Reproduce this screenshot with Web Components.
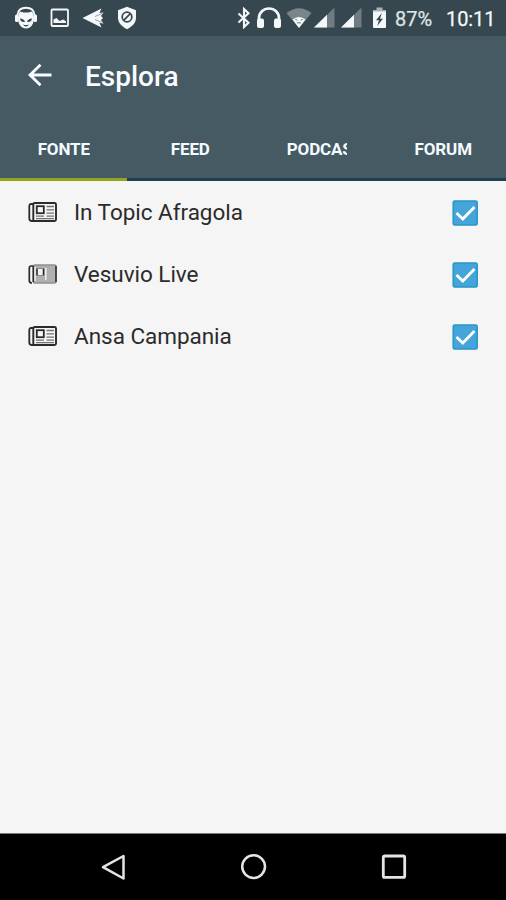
<!DOCTYPE html>
<html lang="it">
<head>
<meta charset="utf-8">
<meta name="viewport" content="width=device-width, initial-scale=1">
<title>Esplora</title>
<style>
  html, body {
    margin: 0;
    height: 100%;
    background: #f5f5f5;
    font-family: Roboto, "Noto Sans", sans-serif;
  }
</style>
</head>
<body>
<explore-screen></explore-screen>

<script>
// name -> [width, height, markup], drawn with currentColor
const ICONS = {
  cat: [24, 24, `
    <path d="M3.500 9C4 4 7.500 1.800 12 1.800S20 4 20.500 9" fill="none" stroke="currentColor" stroke-width="1.900"/>
    <path d="M4.500 8.500L6 5.500l3.500 1h5l3.500-1L19.500 8.500c1 4 .5 8.500-2 11.500-2.500 3.300-8.500 3.300-11 0-2.500-3-3-7.500-2-11.500z" fill="currentColor"/>
    <rect x="1" y="8.500" width="3.500" height="7.500" rx="1.600" fill="currentColor"/>
    <rect x="19.500" y="8.500" width="3.500" height="7.500" rx="1.600" fill="currentColor"/>
    <path d="M6 12.500q4 0 5 3.500-4.500.5-5-3.500zM18 12.500q-4 0-5 3.500 4.500.5 5-3.500zM9 18.500q3 1.200 6 0-1 2-3 2t-3-2z" fill="#37474f"/>`],
  picture: [20, 20, `
    <rect x="1.500" y="1.500" width="16.500" height="16.500" rx="1" fill="none" stroke="currentColor" stroke-width="1.800"/>
    <path d="M3.500 15v-3.500l3-1.500 3 3 4-1.500 2.500 2V15z" fill="currentColor"/>`],
  dart: [24, 22, `
    <path d="M1.500 11L20.500 1.500 18.500 6l4-.5L20 9l2 2-2 2 2.500 3.500-4-.5 2 4.500z" fill="currentColor"/>
    <path d="M14 9.500l7-3M14 12.500l7 3" stroke="#37474f" stroke-width=".5"/>`],
  shield: [20, 24, `
    <path d="M10 .8l9 3.500v7.500c0 5-4 9-9 11.500-5-2.500-9-6.500-9-11.500V4.300z" fill="currentColor"/>
    <circle cx="10" cy="11" r="4.800" fill="none" stroke="#37474f" stroke-width="1.700"/>
    <path d="M6.700 14.300l6.600-6.600" stroke="#37474f" stroke-width="1.700"/>`],
  bluetooth: [14, 22, `
    <path d="M1.500 6.500l10 9.200L7 20V2l4.500 4.300-10 9.200" fill="none" stroke="currentColor" stroke-width="2.100"/>`],
  headphones: [26, 22, `
    <path d="M3 15v-4a10 9.500 0 0 1 20 0v4" fill="none" stroke="currentColor" stroke-width="2.700"/>
    <rect x="1" y="11.500" width="7" height="9.500" rx="2" fill="currentColor"/>
    <rect x="18" y="11.500" width="7" height="9.500" rx="2" fill="currentColor"/>`],
  wifi: [26, 22, `
    <path d="M.5 6Q13-3.500 25.500 6L13 21z" fill="currentColor" opacity=".35"/>
    <path d="M6.500 12.500Q13 7.500 19.500 12.500L13 21z" fill="currentColor"/>
    <path d="M9.500 12l1.500 1.500M15 13.500l1.500-1.500M12 15v1.500M14 15v1.500" stroke="#37474f" stroke-width="1"/>`],
  signal: [21, 22, `
    <path d="M0 20.500L20.500.500v20z" fill="currentColor" opacity=".3"/>
    <path d="M0 20.500L13 7.800v12.700z" fill="currentColor"/>`],
  battery: [15, 22, `
    <path d="M4.500.500h6V3H14v4H1V3h3.500z" fill="currentColor" opacity=".6"/>
    <path d="M1 4.500h13V20a1 1 0 0 1-1 1H2a1 1 0 0 1-1-1z" fill="currentColor"/>
    <path d="M9.800 6L4 13.200h3L5.200 19l5.800-7.200H8z" fill="#37474f"/>`],
  back: [26, 26, `
    <path d="M24.500 13H3M13.500 2.800L3 13l10.500 10.200" fill="none" stroke="currentColor" stroke-width="2.800"/>`],
  news: [30, 22, `
    <rect x="5.300" y="2" width="22.700" height="18" rx="1.500" fill="none" stroke="currentColor" stroke-width="1.900"/>
    <path d="M5 3H3Q1.300 3 1.300 5v12.500Q1.300 20 4 20h3" fill="none" stroke="currentColor" stroke-width="1.800"/>
    <rect x="8.800" y="5.200" width="7" height="7" fill="none" stroke="currentColor" stroke-width="1.800"/>
    <path d="M18.500 5.500H26M18.500 8.800H26M18.500 12.200H26M8 15.200h8M18.500 15.200H26M8 17.700h18" stroke="currentColor" stroke-width="1.300" opacity=".65"/>`],
  newsfaded: [30, 22, `
    <rect x="5.300" y="2" width="22.700" height="18" rx="1.500" fill="#b0b0b0" stroke="#8e8e8e" stroke-width="1.500"/>
    <path d="M9.500 6h5.500v6H9.500zM17 5h1.500v12H17zM6.300 4h1.500v14H6.300z" fill="#f2f2f2"/>
    <path d="M5 3H3Q1.300 3 1.300 5v12.500Q1.300 20 4 20" fill="none" stroke="currentColor" stroke-width="1.700"/>
    <path d="M5.300 3v16M28 3v16M9 5.500v7M15.500 5.500v7" stroke="currentColor" stroke-width="1.500"/>
    <path d="M9 12.500h6.500M9 5.500h6.500" stroke="#888" stroke-width="1.200"/>`],
  check: [26, 26, `
    <rect x="1.200" y="1" width="24" height="24" rx="1.500" fill="#45a5da" stroke="#2795c6" stroke-width="1.500"/>
    <path d="M4.500 13l6.300 6L22.500 7" fill="none" stroke="#fff" stroke-width="2.800"/>`],
  navback: [26, 28, `
    <path d="M23.500 3v22.500L3 14.200z" fill="none" stroke="currentColor" stroke-width="2.500" stroke-linejoin="round"/>`],
  navhome: [28, 28, `
    <circle cx="13.600" cy="13.600" r="11.400" fill="none" stroke="currentColor" stroke-width="2.500"/>`],
  navrecent: [26, 26, `
    <rect x="2.300" y="2" width="21.400" height="21.400" rx="1.500" fill="none" stroke="currentColor" stroke-width="2.800"/>`],
};

class UiIcon extends HTMLElement {
  constructor() {
    super();
    this.attachShadow({ mode: "open" });
  }

  connectedCallback() {
    const [w, h, body] = ICONS[this.getAttribute("name")];
    this.shadowRoot.innerHTML = `
      <style>
        :host { display: block; flex: none; }
        svg { display: block; }
      </style>
      <svg width="${w}" height="${h}" viewBox="0 0 ${w} ${h}" aria-hidden="true">${body}</svg>
    `;
  }
}

class StatusBar extends HTMLElement {
  constructor() {
    super();
    this.attachShadow({ mode: "open" }).innerHTML = `
      <style>
        :host {
          display: flex;
          align-items: center;
          justify-content: space-between;
          box-sizing: border-box;
          height: 36px;
          padding: 0 12px 0 14px;
          background: #37474f;
          color: #f4f8fa;
          font-size: 20px;
          line-height: 34px;
        }
        .group { display: flex; align-items: center; }
        .left { gap: 11.500px; }
        .right ui-icon { margin-right: 5px; }
        .right ui-icon[name="headphones"] { margin-right: 4px; }
        .right ui-icon[name="wifi"] { margin-right: 2px; }
        .right ui-icon[name="signal"] { margin-right: 6px; }
        .right ui-icon[name="signal"].last { margin-right: 10px; }
        .right ui-icon[name="battery"] { margin-right: 8px; }
        .level { width: 51px; color: #dfe5e8; }
        .time { width: 48px; white-space: nowrap; letter-spacing: -0.1px; }
        .level, .time { padding-top: 2px; -webkit-text-stroke: 0.25px; }
      </style>
      <div class="group left">
        <ui-icon name="cat"></ui-icon>
        <ui-icon name="picture"></ui-icon>
        <ui-icon name="dart"></ui-icon>
        <ui-icon name="shield"></ui-icon>
      </div>
      <div class="group right">
        <ui-icon name="bluetooth"></ui-icon>
        <ui-icon name="headphones"></ui-icon>
        <ui-icon name="wifi"></ui-icon>
        <ui-icon name="signal"></ui-icon>
        <ui-icon name="signal" class="last"></ui-icon>
        <ui-icon name="battery"></ui-icon>
        <span class="level">87%</span>
        <span class="time">10:11</span>
      </div>
    `;
  }
}

class AppBar extends HTMLElement {
  constructor() {
    super();
    this.attachShadow({ mode: "open" }).innerHTML = `
      <style>
        :host {
          display: flex;
          align-items: center;
          gap: 32px;
          height: 80px;
          padding-left: 27px;
          background: #455a63;
          color: #f8fbff;
          font-size: 28px;
          font-weight: 500;
          line-height: 80px;
        }
        ui-icon { margin-bottom: 2px; }
        .title { padding-top: 1px; }
      </style>
      <ui-icon name="back"></ui-icon>
      <span class="title"><slot></slot></span>
    `;
  }
}

class TabItem extends HTMLElement {
  constructor() {
    super();
    this.attachShadow({ mode: "open" }).innerHTML = `
      <style>
        :host {
          display: flex;
          justify-content: center;
          box-sizing: border-box;
          border-bottom: 3px solid #1d424e;
          padding: 22px 0 0 1px;
          min-width: 0;
        }
        :host([selected]) { border-color: #93a51f; }
        span {
          max-width: 60px;
          height: 22px;
          overflow: hidden;
          white-space: nowrap;
        }
      </style>
      <span><slot></slot></span>
    `;
  }
}

class TabStrip extends HTMLElement {
  constructor() {
    super();
    this.attachShadow({ mode: "open" }).innerHTML = `
      <style>
        :host {
          display: grid;
          grid-template-columns: repeat(4, 1fr);
          height: 65px;
          background: #455a63;
          color: #f4faff;
          font-size: 17px;
          font-weight: 700;
          line-height: 22px;
          letter-spacing: -0.15px;
        }
      </style>
      <slot></slot>
    `;
  }
}

class SourceRow extends HTMLElement {
  constructor() {
    super();
    this.attachShadow({ mode: "open" });
  }

  connectedCallback() {
    this.shadowRoot.innerHTML = `
      <style>
        :host {
          display: flex;
          align-items: center;
          box-sizing: border-box;
          height: 62px;
          padding: 0 28px;
          color: #2b2b2b;
          font-size: 22.5px;
          line-height: 30px;
        }
        .label { flex: 1; padding-left: 16px; letter-spacing: -0.03px; }
        ui-icon[name="check"] { margin-top: 2px; }
      </style>
      <ui-icon name="${this.getAttribute("icon") || "news"}"></ui-icon>
      <span class="label"><slot></slot></span>
      <ui-icon name="check"></ui-icon>
    `;
  }
}

class NavBar extends HTMLElement {
  constructor() {
    super();
    this.attachShadow({ mode: "open" }).innerHTML = `
      <style>
        :host {
          display: flex;
          align-items: center;
          justify-content: space-between;
          box-sizing: border-box;
          height: 67px;
          padding: 0 99px 0 100px;
          border-top: 1px solid #777;
          background: #000;
          color: #e4e4e4;
        }
      </style>
      <ui-icon name="navback"></ui-icon>
      <ui-icon name="navhome"></ui-icon>
      <ui-icon name="navrecent"></ui-icon>
    `;
  }
}

class ExploreScreen extends HTMLElement {
  constructor() {
    super();
    this.attachShadow({ mode: "open" }).innerHTML = `
      <style>
        :host {
          display: flex;
          flex-direction: column;
          height: 100vh;
          overflow: hidden;
        }
        main { flex: 1; }
      </style>
      <status-bar></status-bar>
      <app-bar>Esplora</app-bar>
      <tab-strip>
        <tab-item selected>FONTE</tab-item>
        <tab-item>FEED</tab-item>
        <tab-item>PODCAST</tab-item>
        <tab-item>FORUM</tab-item>
      </tab-strip>
      <main>
        <source-row>In Topic Afragola</source-row>
        <source-row icon="newsfaded">Vesuvio Live</source-row>
        <source-row>Ansa Campania</source-row>
      </main>
      <nav-bar></nav-bar>
    `;
  }
}

customElements.define("ui-icon", UiIcon);
customElements.define("status-bar", StatusBar);
customElements.define("app-bar", AppBar);
customElements.define("tab-item", TabItem);
customElements.define("tab-strip", TabStrip);
customElements.define("source-row", SourceRow);
customElements.define("nav-bar", NavBar);
customElements.define("explore-screen", ExploreScreen);
</script>
</body>
</html>
